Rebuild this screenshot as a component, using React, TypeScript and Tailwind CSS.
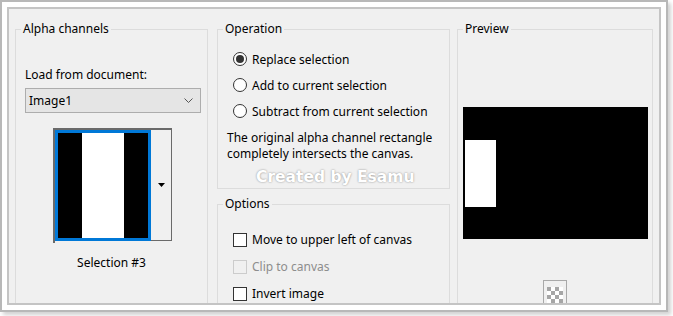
import React from 'react';

const Radio = ({ checked, label }: { checked?: boolean; label: string }) => (
  <div className="flex h-[26px] items-center pl-[15px]">
    <span className="flex h-[14px] w-[14px] items-center justify-center rounded-full border border-[#333] bg-white">
      {checked && <span className="h-[8px] w-[8px] rounded-full bg-[#333]" />}
    </span>
    <span className="ml-[5px] pt-px">{label}</span>
  </div>
);

const Check = ({ label, disabled }: { label: string; disabled?: boolean }) => (
  <div className="flex h-[27px] items-center pl-[15px]">
    <span
      className={
        disabled
          ? 'h-[14px] w-[14px] border border-[#cccccc] bg-[#f0f0f0]'
          : 'h-[14px] w-[14px] border border-[#333] bg-white'
      }
    />
    <span className={disabled ? 'ml-[5px] pt-px text-[#8d8d8d]' : 'ml-[5px] pt-px'}>{label}</span>
  </div>
);

const App = () => {
  return (
    <div className="h-[316px] w-[673px] bg-white font-['Noto_Sans',sans-serif] text-[12px] leading-4 text-black">
      <div className="h-[312px] w-[668px] border-2 border-[#b8b8b8] bg-white p-[5px] shadow-[3px_3px_4px_rgba(0,0,0,0.18)]">
        <div className="relative h-full overflow-hidden border-2 border-[#c4c4c4] bg-[#f0f0f0]">
          <div className="flex pl-[6px] pt-[12px]">
            {/* Alpha channels */}
            <fieldset className="h-[300px] w-[193px] border border-[#dcdcdc]">
              <legend className="ml-[5px] px-[2px]">Alpha channels</legend>
              <div className="ml-[9px] mt-[30px]">Load from document:</div>
              <div className="ml-[9px] mt-[5px] flex h-[25px] w-[176px] items-center justify-between border border-[#adadad] bg-[#e5e5e5] pl-[3px] pr-[7px]">
                <span className="pt-px">Image1</span>
                <svg width="9" height="5" viewBox="0 0 9 5">
                  <path d="M0.5 0.5 L4.5 4.5 L8.5 0.5" fill="none" stroke="#555" strokeWidth="1" />
                </svg>
              </div>
              <div className="ml-[37px] mt-[15px] flex h-[115px] w-[119px] border-l-2 border-t-2 border-[#6a6a6a]">
                <div className="flex h-[111px] w-[96px] border-[3px] border-[#0078d7] bg-black">
                  <div className="w-[24px] bg-black" />
                  <div className="w-[42px] bg-white" />
                  <div className="flex-1 bg-black" />
                </div>
                <div className="flex h-[111px] w-[21px] items-center justify-center border-b border-r border-[#6a6a6a] bg-[#f0f0f0]">
                  <svg width="7" height="4" viewBox="0 0 7 4">
                    <path d="M0 0 H7 L3.5 4 Z" fill="#000" />
                  </svg>
                </div>
              </div>
              <div className="mt-[12px] text-center">Selection #3</div>
            </fieldset>

            <div className="ml-[9px] flex w-[233px] flex-col">
              {/* Operation */}
              <fieldset className="h-[168px] border border-[#dcdcdc]">
                <legend className="ml-[5px] px-[2px]">Operation</legend>
                <div className="mt-[9px]">
                  <Radio checked label="Replace selection" />
                  <Radio label="Add to current selection" />
                  <Radio label="Subtract from current selection" />
                </div>
                <p className="ml-[9px] mt-[6px]">
                  The original alpha channel rectangle
                  <br />
                  completely intersects the canvas.
                </p>
              </fieldset>

              {/* Options */}
              <fieldset className="mt-[7px] h-[140px] border border-[#dcdcdc]">
                <legend className="ml-[5px] px-[2px]">Options</legend>
                <div className="mt-[14px]">
                  <Check label="Move to upper left of canvas" />
                  <Check label="Clip to canvas" disabled />
                  <Check label="Invert image" />
                </div>
              </fieldset>
            </div>

            {/* Preview */}
            <fieldset className="ml-[7px] h-[300px] w-[196px] border border-[#dcdcdc]">
              <legend className="ml-[5px] px-[2px]">Preview</legend>
              <div className="mx-auto mt-[70px] h-[132px] w-[185px] bg-black pl-[2px] pt-[33px]">
                <div className="h-[67px] w-[31px] bg-white" />
              </div>
              <div className="mx-auto mt-[41px] flex h-[30px] w-[24px] justify-center border border-[#a9a9a9] bg-[#f0f0f0] pt-[6px]">
                <div className="grid h-[16px] w-[16px] grid-cols-4">
                  {Array.from({ length: 16 }).map((_, i) => (
                    <div
                      key={i}
                      className={(Math.floor(i / 4) + i) % 2 === 0 ? 'bg-[#a6a6a6]' : 'bg-white'}
                    />
                  ))}
                </div>
              </div>
            </fieldset>
          </div>

          {/* watermark */}
          <div className="absolute left-[247px] top-[160px] font-['DejaVu_Sans',sans-serif] text-[15.5px] font-bold leading-4 text-white [text-shadow:0_0_2px_rgba(0,0,0,0.45)]">
            Created by Esamu
          </div>
        </div>
      </div>
    </div>
  );
};

export default App;
